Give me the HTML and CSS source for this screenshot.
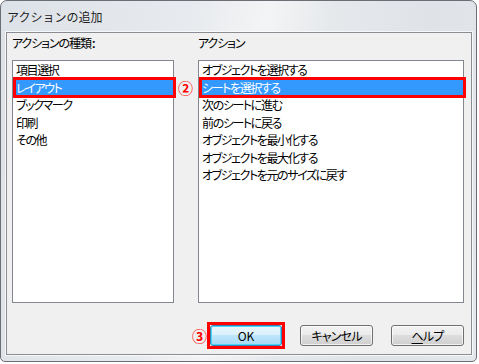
FILE: index.html
```html
<!DOCTYPE html>
<html lang="ja">
<head>
    <meta charset="UTF-8">
    <title>アクションの追加</title>
    <link rel="stylesheet" href="styles.css">
</head>
<body>

    <div class="window">
        <div class="title">アクションの追加</div>

        <div class="client">
            <div class="panes">
                <!-- 種類 -->
                <div class="pane">
                    <div class="pane-label">アクションの種類<span class="colon">:</span></div>
                    <ul class="listbox">
                        <li>項目選択</li>
                        <li class="selected"><span class="mark"></span>レイアウト</li>
                        <li>ブックマーク</li>
                        <li>印刷</li>
                        <li>その他</li>
                    </ul>
                </div>

                <!-- アクション -->
                <div class="pane">
                    <div class="pane-label">アクション</div>
                    <ul class="listbox">
                        <li>オブジェクトを選択する</li>
                        <li class="selected"><span class="mark"><span class="num">②</span></span>シートを選択する</li>
                        <li>次のシートに進む</li>
                        <li>前のシートに戻る</li>
                        <li>オブジェクトを最小化する</li>
                        <li>オブジェクトを最大化する</li>
                        <li>オブジェクトを元のサイズに戻す</li>
                    </ul>
                </div>
            </div>

            <div class="buttons">
                <span class="focus-mark">
                    <span class="num">③</span>
                    <button class="btn default">OK</button>
                </span>
                <button class="btn">キャンセル</button>
                <button class="btn"><u>ヘ</u>ルプ</button>
            </div>
        </div>
    </div>

</body>
</html>
```

FILE: styles.css
```css
body {
    margin: 0;
    background-color: #ffffff;
    font-family: "Noto Sans CJK JP", sans-serif;
    font-size: 12px;
    color: #000;
}

.window {
    box-sizing: border-box;
    width: 477px;
    height: 362px;
    border: 1px solid #6b6f75;
    border-radius: 7px 7px 5px 5px;
    background: linear-gradient(100deg, #dde2e8 0%, #e7eaee 35%, #f3f4f5 50%, #e6e9ec 62%, #dfe3e8 80%, #e3e7eb 100%);
}

.title {
    height: 31px;
    line-height: 31px;
    padding-left: 6px;
    color: #1e1e1e;
}

.client {
    margin: 0 4px 0 5px;
    padding: 2px 7px 5px 5px;
    background-color: #f0f0f0;
    border: 1px solid #8a8d91;
    box-shadow: 0 0 0 1px rgba(255, 255, 255, 0.7);
}

.panes {
    display: grid;
    grid-template-columns: 162px 266px;
    column-gap: 24px;
}

.pane {
    display: flex;
    flex-direction: column;
}

.pane-label {
    height: 16px;
    line-height: 16px;
    margin-bottom: 9px;
    font-feature-settings: "palt";
    letter-spacing: -1.1px;
}

.pane-label .colon {
    margin-left: 1px;
    font-family: "Liberation Sans", sans-serif;
    font-weight: bold;
    letter-spacing: 0;
}

.listbox {
    box-sizing: border-box;
    height: 243px;
    margin: 0;
    padding: 0;
    list-style: none;
    background-color: #ffffff;
    border: 1px solid #828790;
}

.listbox li {
    position: relative;
    height: 17.5px;
    line-height: 17.5px;
    padding-left: 3px;
    white-space: nowrap;
    font-feature-settings: "palt";
    letter-spacing: -1.4px;
}

.listbox li.selected {
    background-color: #3399ff;
    color: #ffffff;
}

.mark {
    position: absolute;
    top: -2px;
    bottom: -2px;
    left: 0;
    right: -3px;
    border: 3px solid #ff0000;
}

.num {
    position: absolute;
    color: #ff0000;
    font-size: 15px;
    font-weight: bold;
    line-height: 15px;
    letter-spacing: 0;
}

.mark .num {
    left: -24px;
    top: 0;
}

.buttons {
    display: flex;
    justify-content: flex-end;
    align-items: center;
    gap: 18px;
    margin-top: 19px;
}

.focus-mark {
    position: relative;
    display: flex;
    border: 3px solid #ff0000;
    margin-right: -3px;
}

.focus-mark .num {
    left: -18px;
    top: 3px;
}

.btn {
    box-sizing: border-box;
    width: 73px;
    height: 21px;
    padding: 0;
    font-family: "Noto Sans CJK JP", sans-serif;
    font-size: 12px;
    color: #000;
    font-feature-settings: "palt";
    letter-spacing: -0.8px;
    border: 1px solid #707070;
    border-radius: 3px;
    background: linear-gradient(#f2f2f2 0%, #ebebeb 50%, #dddddd 50%, #cfcfcf 100%);
    box-shadow: inset 0 0 0 1px rgba(255, 255, 255, 0.7);
}

.btn u {
    text-underline-offset: 2px;
}

.btn.default {
    width: 72px;
    letter-spacing: 0;
    border-color: #3c7fb1;
    background: linear-gradient(#eaf6fd 0%, #d9f0fc 50%, #bee6fd 50%, #a7d9f5 100%);
    box-shadow: inset 0 0 0 1px #48d8fb;
}
```
